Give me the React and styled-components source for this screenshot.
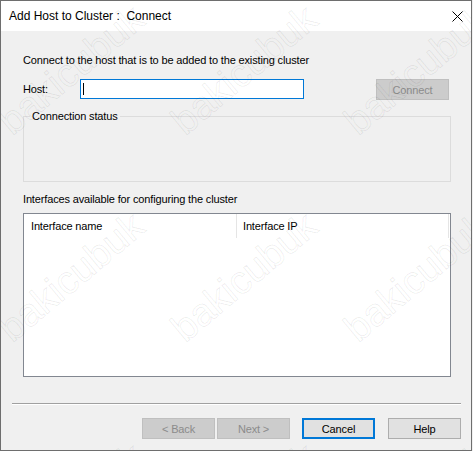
import React from 'react';
import styled, { createGlobalStyle } from 'styled-components';

const GlobalStyle = createGlobalStyle`
  html, body { margin: 0; padding: 0; background: #f0f0f0; }
  body { font-family: "Liberation Sans", Arial, sans-serif; font-size: 11px; color: #000; }
  * { box-sizing: border-box; }
`;

const Window = styled.div`
  position: relative;
  width: 472px;
  height: 451px;
  border: 1px solid #6e6e6e;
  background: #f0f0f0;
  display: flex;
  flex-direction: column;
  overflow: hidden;
`;

const TitleBar = styled.div`
  height: 30px;
  flex: none;
  background: #ffffff;
  display: flex;
  align-items: center;
  padding-left: 8px;
  padding-right: 8px;
`;

const Title = styled.div`
  font-size: 12px;
  line-height: 15px;
  flex: 1;
  white-space: pre;
  padding-top: 1px;
`;

const CloseBtn = styled.div`
  width: 11px;
  height: 11px;
  display: flex;
  svg { display: block; }
`;

const Content = styled.div`
  flex: 1;
  display: flex;
  flex-direction: column;
  padding: 23px 20px 0 22px;
`;

const Text = styled.div`
  line-height: 13px;
  letter-spacing: -0.15px;
  white-space: nowrap;
  margin-top: ${(p) => p.$mt || 0}px;
`;

const HostRow = styled.div`
  display: flex;
  align-items: flex-start;
  margin-top: 12px;
  height: 21px;
`;

const HostLabel = styled.div`
  width: 57px;
  line-height: 21px;
  letter-spacing: -0.15px;
`;

const TextBox = styled.div`
  width: 224px;
  height: 20px;
  border: 1px solid #0078d7;
  background: #fff;
  display: flex;
  align-items: center;
  padding-left: 2px;
`;

const Caret = styled.span`
  display: block;
  width: 1px;
  height: 12px;
  background: #000;
`;

const Button = styled.div`
  width: 73px;
  height: 21px;
  flex: none;
  display: flex;
  align-items: center;
  justify-content: center;
  letter-spacing: -0.15px;
  background: ${(p) => (p.$disabled ? '#cccccc' : '#e1e1e1')};
  border: ${(p) =>
    p.$default ? '2px solid #0078d7' : p.$disabled ? '1px solid #bfbfbf' : '1px solid #adadad'};
  color: ${(p) => (p.$disabled ? '#8b8b8b' : '#000')};
  margin-left: ${(p) => p.$ml || 0}px;
`;

const GroupBox = styled.fieldset`
  margin: 10px 0 0 0;
  padding: 0;
  height: 72px;
  border: 1px solid #dcdcdc;
  min-width: 0;
`;

const Legend = styled.legend`
  margin-left: 6px;
  padding: 0 2px;
  line-height: 13px;
  letter-spacing: -0.15px;
`;

const ListView = styled.div`
  margin-top: 7px;
  height: 164px;
  border: 1px solid #828790;
  background: #fff;
`;

const ListHeader = styled.div`
  display: flex;
  height: 24px;
`;

const HeaderCell = styled.div`
  width: ${(p) => p.$w}px;
  border-right: 1px solid #e5e5e5;
  padding-left: ${(p) => p.$pl}px;
  display: flex;
  align-items: center;
  letter-spacing: -0.15px;
`;

const Footer = styled.div`
  flex: none;
  padding: 0 10px 11px 11px;
`;

const Separator = styled.div`
  height: 2px;
  border-top: 1px solid #a0a0a0;
  border-bottom: 1px solid #ffffff;
`;

const ButtonRow = styled.div`
  display: flex;
  justify-content: flex-end;
  margin-top: 13px;
`;

const Watermarks = styled.div`
  position: absolute;
  inset: 0;
  pointer-events: none;
  z-index: 2;
`;

const Mark = styled.span`
  position: absolute;
  left: ${(p) => p.$x}px;
  top: ${(p) => p.$y}px;
  transform-origin: 0 100%;
  transform: translateY(-100%) rotate(-40deg);
  font-family: "Liberation Sans", Arial, sans-serif;
  font-size: 39px;
  line-height: 39px;
  color: transparent;
  -webkit-text-stroke: 1px rgba(0, 0, 0, 0.07);
  white-space: nowrap;
`;

const marks = [];
[140, 347, 578].forEach((y) => {
  [15, 188, 361].forEach((x) => marks.push({ x, y }));
});

export default function App() {
  return (
    <>
      <GlobalStyle />
      <Window>
        <TitleBar>
          <Title>{'Add Host to Cluster :  Connect'}</Title>
          <CloseBtn>
            <svg width="11" height="11" viewBox="0 0 11 11">
              <path d="M0.5 0.5 L10.5 10.5 M10.5 0.5 L0.5 10.5" stroke="#000" strokeWidth="1" fill="none" />
            </svg>
          </CloseBtn>
        </TitleBar>
        <Content>
          <Text>Connect to the host that is to be added to the existing cluster</Text>
          <HostRow>
            <HostLabel>Host:</HostLabel>
            <TextBox>
              <Caret />
            </TextBox>
            <Button $disabled $ml={72}>Connect</Button>
          </HostRow>
          <GroupBox>
            <Legend>Connection status</Legend>
          </GroupBox>
          <Text $mt={11}>Interfaces available for configuring the cluster</Text>
          <ListView>
            <ListHeader>
              <HeaderCell $w={213} $pl={7}>Interface name</HeaderCell>
              <HeaderCell $w={212} $pl={6}>Interface IP</HeaderCell>
            </ListHeader>
          </ListView>
        </Content>
        <Footer>
          <Separator />
          <ButtonRow>
            <Button $disabled>&lt; Back</Button>
            <Button $disabled $ml={2}>Next &gt;</Button>
            <Button $default $ml={12}>Cancel</Button>
            <Button $ml={13}>Help</Button>
          </ButtonRow>
        </Footer>
        <Watermarks aria-hidden="true">
          {marks.map((m, i) => (
            <Mark key={i} $x={m.x} $y={m.y}>bakicubuk</Mark>
          ))}
        </Watermarks>
      </Window>
    </>
  );
}
